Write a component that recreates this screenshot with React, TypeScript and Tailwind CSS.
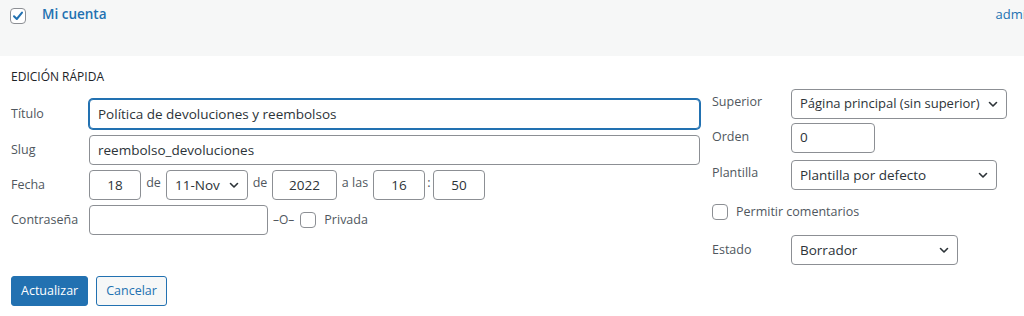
import React from 'react';

const Chevron: React.FC = () => (
  <svg width="12" height="12" viewBox="0 0 12 12" className="shrink-0">
    <path d="M2.5 4.5 L6 8 L9.5 4.5" fill="none" stroke="#2c3338" strokeWidth="1.6" strokeLinecap="round" strokeLinejoin="round" />
  </svg>
);

const Box: React.FC<{ checked?: boolean }> = ({ checked }) => (
  <span className="flex h-4 w-4 shrink-0 items-center justify-center rounded-[4px] border border-[#8c8f94] bg-white">
    {checked && (
      <svg width="14" height="14" viewBox="0 0 14 14">
        <path d="M3 7.2 L5.8 10 L11 3.6" fill="none" stroke="#2271b1" strokeWidth="2" strokeLinecap="round" strokeLinejoin="round" />
      </svg>
    )}
  </span>
);

const Field: React.FC<{ w: string; children?: React.ReactNode; center?: boolean; focus?: boolean }> = ({ w, children, center, focus }) => (
  <div
    className={`flex h-[30px] shrink-0 items-center rounded-[4px] border bg-white px-2 text-[13.5px] text-[#2c3338] ${w} ${center ? 'justify-center' : ''} ${
      focus ? 'border-[#2271b1] shadow-[0_0_0_1px_#2271b1]' : 'border-[#8c8f94]'
    }`}
  >
    {children}
  </div>
);

const Select: React.FC<{ w: string; label: string; small?: boolean }> = ({ w, label, small }) => (
  <div
    className={`flex h-[30px] shrink-0 items-center justify-between rounded-[4px] border border-[#8c8f94] bg-white pl-2 pr-[7px] text-[#2c3338] ${w} ${
      small ? 'text-[13px]' : 'text-[13.5px]'
    }`}
  >
    <span className="whitespace-nowrap">{label}</span>
    <Chevron />
  </div>
);

const Sep: React.FC<{ w: string; children: React.ReactNode }> = ({ w, children }) => (
  <span className={`-mt-1 shrink-0 text-center ${w}`}>{children}</span>
);

const App: React.FC = () => {
  return (
    <div className="h-[316px] w-[1024px] overflow-hidden bg-white text-[12.5px] text-[#50575e]" style={{ fontFamily: '"Open Sans", sans-serif' }}>
      <div className="flex h-14 items-start justify-between bg-[#f6f7f7] pl-[10px] pt-[7px]">
        <div className="flex items-center gap-4">
          <Box checked />
          <span className="-mt-[3px] text-[13.5px] font-semibold text-[#2271b1]">Mi cuenta</span>
        </div>
        <span className="-mr-[10px] -mt-[2px] text-[13px] text-[#2271b1]">admin</span>
      </div>

      <div className="px-[11px] pt-[12px]">
        <div className="text-[12px] font-normal text-[#1d2327]">EDICIÓN RÁPIDA</div>

        <div className="flex">
          <div className="w-[690px] pt-[13px]">
            <div className="flex h-[30px] items-center">
              <span className="w-[78px]">Título</span>
              <Field w="w-[611px]" focus>
                Política de devoluciones y reembolsos
              </Field>
            </div>
            <div className="mt-[6px] flex h-[30px] items-center">
              <span className="w-[78px]">Slug</span>
              <Field w="w-[611px]">reembolso_devoluciones</Field>
            </div>
            <div className="mt-[5px] flex h-[30px] items-center">
              <span className="w-[78px]">Fecha</span>
              <Field w="w-[52px]" center>18</Field>
              <Sep w="w-[25px]">de</Sep>
              <Select w="w-[82px]" label="11-Nov" />
              <Sep w="w-[24px]">de</Sep>
              <Field w="w-[65px]" center>2022</Field>
              <Sep w="w-[36px]">a las</Sep>
              <Field w="w-[52px]" center>16</Field>
              <Sep w="w-[8px]">:</Sep>
              <Field w="w-[52px]" center>50</Field>
            </div>
            <div className="mt-[5px] flex h-[30px] items-center">
              <span className="w-[78px]">Contraseña</span>
              <Field w="w-[179px]" />
              <span className="ml-[5px] text-[12px]">–O–</span>
              <span className="ml-[6px]"><Box /></span>
              <span className="ml-[8px]">Privada</span>
            </div>
          </div>

          <div className="ml-[11px] flex-1 pt-[3px]">
            <div className="flex h-[30px] items-center">
              <span className="w-[79px] -mt-1">Superior</span>
              <Select w="w-[216px]" label="Página principal (sin superior)" small />
            </div>
            <div className="mt-[3px] flex h-[31px] items-center">
              <span className="w-[79px]">Orden</span>
              <Field w="w-[84px]">0</Field>
            </div>
            <div className="mt-[7px] flex h-[30px] items-center">
              <span className="w-[79px] -mt-1">Plantilla</span>
              <Select w="w-[206px]" label="Plantilla por defecto" />
            </div>
            <div className="mt-[8px] flex h-[28px] items-center gap-2">
              <Box />
              <span>Permitir comentarios</span>
            </div>
            <div className="mt-[9px] flex h-[30px] items-center">
              <span className="w-[79px]">Estado</span>
              <Select w="w-[167px]" label="Borrador" />
            </div>
          </div>
        </div>

        <div className="mt-[11px] flex gap-2">
          <button className="h-[30px] rounded-[3px] border border-[#2271b1] bg-[#2271b1] px-[9px] text-[12.5px] text-white">Actualizar</button>
          <button className="h-[30px] rounded-[3px] border border-[#2271b1] bg-[#f6f7f7] px-[9px] text-[12.5px] text-[#2271b1]">Cancelar</button>
        </div>
      </div>
    </div>
  );
};

export default App;
